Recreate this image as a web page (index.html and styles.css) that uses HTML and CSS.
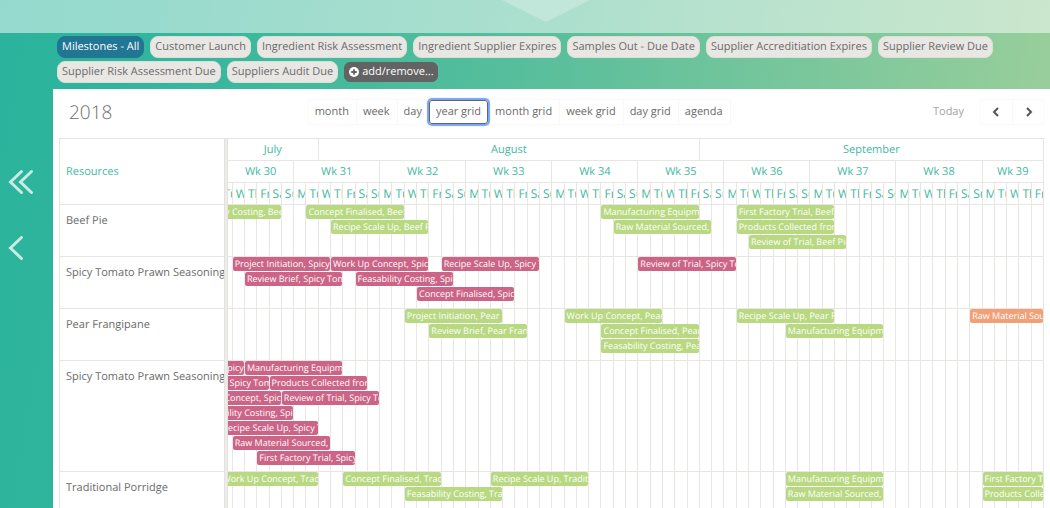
FILE: index.html
```html
<!DOCTYPE html>
<html lang="en">
<head>
<meta charset="utf-8">
<title>Milestones - year grid</title>
<link rel="stylesheet" href="styles.css">
</head>
<body>
<div class="app">
  <header class="banner">
    <svg class="banner-notch" viewBox="0 0 88 22" aria-hidden="true"><path d="M0 0H88L44 22Z"/></svg>
  </header>
  <div class="body">
    <nav class="side" aria-label="History">
      <button class="side-button" type="button" aria-label="Back to start">
        <svg width="26" height="26" viewBox="0 0 26 26"><path d="M13.500 2.500L2.500 13L13.500 23.500M23.500 2.500L12.500 13L23.500 23.500"/></svg>
      </button>
      <button class="side-button" type="button" aria-label="Back">
        <svg width="26" height="26" viewBox="0 0 26 26"><path d="M13.500 2.500L2.500 13L13.500 23.500"/></svg>
      </button>
    </nav>
    <main class="main">
      <div class="filters">
        <button class="pill pill-active" type="button">Milestones - All</button>
        <button class="pill" type="button">Customer Launch</button>
        <button class="pill" type="button">Ingredient Risk Assessment</button>
        <button class="pill" type="button">Ingredient Supplier Expires</button>
        <button class="pill" type="button">Samples Out - Due Date</button>
        <button class="pill" type="button">Supplier Accreditiation Expires</button>
        <button class="pill" type="button">Supplier Review Due</button>
        <button class="pill" type="button">Supplier Risk Assessment Due</button>
        <button class="pill" type="button">Suppliers Audit Due</button>
        <button class="pill pill-add" type="button"><svg width="10" height="10" viewBox="0 0 10 10" aria-hidden="true"><circle cx="5" cy="5" r="5" fill="#fff"/><path d="M5 2.200V7.800M2.200 5H7.800" stroke="#636363" stroke-width="1.800"/></svg>add/remove...</button>
      </div>
      <section class="panel">
        <div class="toolbar">
          <h1 class="title">2018</h1>
          <div class="views">
            <button class="view" type="button">month</button>
            <button class="view" type="button">week</button>
            <button class="view" type="button">day</button>
            <button class="view view-active" type="button">year grid</button>
            <button class="view" type="button">month grid</button>
            <button class="view" type="button">week grid</button>
            <button class="view" type="button">day grid</button>
            <button class="view" type="button">agenda</button>
          </div>
          <div class="paging">
            <button class="today" type="button" disabled>Today</button>
            <div class="arrows">
              <button class="arrow" type="button" aria-label="Previous"><svg width="8" height="10" viewBox="0 0 8 10"><path d="M6 1L2 5L6 9"/></svg></button>
              <button class="arrow" type="button" aria-label="Next"><svg width="8" height="10" viewBox="0 0 8 10"><path d="M2 1L6 5L2 9"/></svg></button>
            </div>
          </div>
        </div>

        <div class="schedule">
          <div class="row row-head">
            <div class="resource resource-head">Resources</div>
            <div class="splitter"></div>
            <div class="lane">
              <div class="scale">
                <div class="period" style="grid-column:1/9">July</div>
                <div class="period" style="grid-column:9/40">August</div>
                <div class="period" style="grid-column:40/68">September</div>
              </div>
              <div class="scale">
                <div class="period" style="grid-column:1/7">Wk 30</div>
                <div class="period" style="grid-column:7/14">Wk 31</div>
                <div class="period" style="grid-column:14/21">Wk 32</div>
                <div class="period" style="grid-column:21/28">Wk 33</div>
                <div class="period" style="grid-column:28/35">Wk 34</div>
                <div class="period" style="grid-column:35/42">Wk 35</div>
                <div class="period" style="grid-column:42/49">Wk 36</div>
                <div class="period" style="grid-column:49/56">Wk 37</div>
                <div class="period" style="grid-column:56/63">Wk 38</div>
                <div class="period" style="grid-column:63/68">Wk 39</div>
              </div>
              <div class="track day-names"></div>
            </div>
          </div>

          <div class="row">
            <div class="resource">Beef Pie</div>
            <div class="splitter"></div>
            <div class="lane">
              <div class="track events">
                <div class="event green" style="grid-area:1/6/auto/span 8">Feasability Costing, Beef Pie</div>
                <div class="event green" style="grid-area:1/16/auto/span 8">Concept Finalised, Beef Pie</div>
                <div class="event green" style="grid-area:2/18/auto/span 8">Recipe Scale Up, Beef Pie</div>
                <div class="event green" style="grid-area:1/40/auto/span 8">Manufacturing Equipment, Beef Pie</div>
                <div class="event green" style="grid-area:2/41/auto/span 8">Raw Material Sourced, Beef Pie</div>
                <div class="event green" style="grid-area:1/51/auto/span 8">First Factory Trial, Beef Pie</div>
                <div class="event green" style="grid-area:2/51/auto/span 8">Products Collected from Trial, Beef Pie</div>
                <div class="event green" style="grid-area:3/52/auto/span 8">Review of Trial, Beef Pie</div>
              </div>
            </div>
          </div>

          <div class="row">
            <div class="resource">Spicy Tomato Prawn Seasoning</div>
            <div class="splitter"></div>
            <div class="lane">
              <div class="track events">
                <div class="event pink" style="grid-area:1/10/auto/span 8">Project Initiation, Spicy Tomato</div>
                <div class="event pink" style="grid-area:2/11/auto/span 8">Review Brief, Spicy Tomato</div>
                <div class="event pink" style="grid-area:1/18/auto/span 8">Work Up Concept, Spicy Tomato</div>
                <div class="event pink" style="grid-area:2/20/auto/span 8">Feasability Costing, Spicy Tomato</div>
                <div class="event pink" style="grid-area:3/25/auto/span 8">Concept Finalised, Spicy Tomato</div>
                <div class="event pink" style="grid-area:1/27/auto/span 8">Recipe Scale Up, Spicy Tomato</div>
                <div class="event pink" style="grid-area:1/43/auto/span 8">Review of Trial, Spicy Tomato</div>
              </div>
            </div>
          </div>

          <div class="row">
            <div class="resource">Pear Frangipane</div>
            <div class="splitter"></div>
            <div class="lane">
              <div class="track events">
                <div class="event green" style="grid-area:1/24/auto/span 8">Project Initiation, Pear Frangipane</div>
                <div class="event green" style="grid-area:2/26/auto/span 8">Review Brief, Pear Frangipane</div>
                <div class="event green" style="grid-area:1/37/auto/span 8">Work Up Concept, Pear Frangipane</div>
                <div class="event green" style="grid-area:2/40/auto/span 8">Concept Finalised, Pear Frangipane</div>
                <div class="event green" style="grid-area:3/40/auto/span 8">Feasability Costing, Pear Frangipane</div>
                <div class="event green" style="grid-area:1/51/auto/span 8">Recipe Scale Up, Pear Frangipane</div>
                <div class="event green" style="grid-area:2/55/auto/span 8">Manufacturing Equipment, Pear</div>
                <div class="event orange" style="grid-area:1/70/auto/76">Raw Material Sourced, Pear</div>
              </div>
            </div>
          </div>

          <div class="row">
            <div class="resource">Spicy Tomato Prawn Seasoning</div>
            <div class="splitter"></div>
            <div class="lane">
              <div class="track events">
                <div class="event pink" style="grid-area:1/3/auto/span 8">Project Initiation, Spicy Tomato</div>
                <div class="event pink" style="grid-area:2/5/auto/span 8">Review Brief, Spicy Tomato</div>
                <div class="event pink" style="grid-area:3/6/auto/span 8">Work Up Concept, Spicy Tomato</div>
                <div class="event pink" style="grid-area:4/7/auto/span 8">Feasability Costing, Spicy Tomato</div>
                <div class="event pink" style="grid-area:5/9/auto/span 8">Recipe Scale Up, Spicy Tomato</div>
                <div class="event pink" style="grid-area:6/10/auto/span 8">Raw Material Sourced, Spicy Tomato</div>
                <div class="event pink" style="grid-area:1/11/auto/span 8">Manufacturing Equipment, Spicy Tomato</div>
                <div class="event pink" style="grid-area:7/12/auto/span 8">First Factory Trial, Spicy Tomato</div>
                <div class="event pink" style="grid-area:2/13/auto/span 8">Products Collected from Trial, Spicy</div>
                <div class="event pink" style="grid-area:3/14/auto/span 8">Review of Trial, Spicy Tomato</div>
              </div>
            </div>
          </div>

          <div class="row row-last">
            <div class="resource">Traditional Porridge</div>
            <div class="splitter"></div>
            <div class="lane">
              <div class="track events">
                <div class="event green" style="grid-area:1/9/auto/span 8">Work Up Concept, Traditional</div>
                <div class="event green" style="grid-area:1/19/auto/span 8">Concept Finalised, Traditional</div>
                <div class="event green" style="grid-area:2/24/auto/span 8">Feasability Costing, Traditional</div>
                <div class="event green" style="grid-area:1/31/auto/span 8">Recipe Scale Up, Traditional</div>
                <div class="event green" style="grid-area:1/55/auto/span 8">Manufacturing Equipment, Traditional</div>
                <div class="event green" style="grid-area:2/55/auto/span 8">Raw Material Sourced, Traditional</div>
                <div class="event green" style="grid-area:1/71/auto/76">First Factory Trial, Traditional</div>
                <div class="event green" style="grid-area:2/71/auto/76">Products Collected from Trial</div>
              </div>
            </div>
          </div>
        </div>
      </section>
    </main>
  </div>
</div>
<script src="script.js"></script>
</body>
</html>
```
FILE: styles.css
```css
* { box-sizing: border-box; }

body {
  margin: 0;
  font-family: "Open Sans", "Noto Sans", sans-serif;
  font-size: 11px;
  line-height: 16px;
  color: #6b6b6b;
  text-rendering: geometricPrecision;
}

button {
  margin: 0;
  padding: 0;
  border: 0;
  background: none;
  font: inherit;
  color: inherit;
  text-rendering: inherit;
  white-space: nowrap;
}

.app {
  display: flex;
  flex-direction: column;
  height: 100vh;
  overflow: hidden;
  background: linear-gradient(100deg, #2bb39d 0%, #30b59d 12%, #5bbf9c 50%, #9ccf9b 96%);
}

.banner {
  display: flex;
  justify-content: center;
  align-items: flex-start;
  flex: none;
  height: 33px;
  padding-left: 42px;
  background: rgba(255, 255, 255, 0.5);
}

.banner-notch {
  width: 88px;
  height: 22px;
  fill: rgba(255, 255, 255, 0.25);
}

.body {
  display: flex;
  flex: 1;
  min-height: 0;
}

.side {
  display: flex;
  flex-direction: column;
  flex: none;
  gap: 40px;
  width: 53px;
  padding: 136px 0 0 8px;
}

.side-button {
  width: 26px;
  height: 26px;
}

.side-button svg {
  display: block;
  fill: none;
  stroke: #c9ebe3;
  stroke-width: 3;
  stroke-linecap: round;
}

.main {
  display: flex;
  flex-direction: column;
  flex: 1;
  min-width: 0;
}

.filters {
  display: flex;
  flex-wrap: wrap;
  gap: 3px 6px;
  padding: 3px 4px 6px;
}

.pill {
  height: 22px;
  padding: 0 4px;
  border: 1px solid #dcdfd8;
  border-radius: 8px;
  background: #e8e7e3;
}

.pill-active {
  border-color: #217693;
  background: #217693;
  color: #fff;
}

.pill-add {
  display: flex;
  align-items: center;
  gap: 3px;
  height: 20px;
  margin-top: 1px;
  padding: 0 3px 0 4px;
  border-color: #636363;
  border-radius: 6px;
  background: #636363;
  color: #fff;
}

.panel {
  display: flex;
  flex-direction: column;
  flex: 1;
  min-height: 0;
  padding: 0 6px;
  background: #fff;
}

.toolbar {
  display: flex;
  justify-content: space-between;
  align-items: center;
  flex: none;
  height: 49px;
  padding: 0 0 4px 10px;
}

.title {
  margin: 0;
  font-size: 19px;
  font-weight: 300;
  line-height: 26px;
}

.views,
.paging,
.arrows {
  display: flex;
}

.views,
.arrows {
  border-radius: 3px;
  box-shadow: 0 0 2px #ececec;
}

.view {
  height: 24px;
  padding: 0 7px;
  box-shadow: 1px 0 0 #f8f8f8;
}

.view-active {
  padding: 0 6px;
  border: 1px solid #666;
  border-radius: 3px;
  box-shadow: 0 0 1px 2px #72a4f3;
  z-index: 1;
}

.paging { gap: 8px; }

.today {
  padding: 0 8px;
  color: #a3a3a3;
}

.arrow {
  display: grid;
  place-items: center;
  width: 32px;
  height: 24px;
}

.arrow + .arrow { border-left: 1px solid #f8f8f8; }

.arrow svg {
  fill: none;
  stroke: #555;
  stroke-width: 2;
}

.schedule {
  display: flex;
  flex-direction: column;
  flex: 1;
  min-height: 0;
  border: 1px solid #e6e4e1;
  border-bottom: 0;
}

.row {
  display: grid;
  grid-template-columns: 164px 4px minmax(0, 1fr);
  flex: none;
  min-height: 52px;
  border-bottom: 1px solid #e8e6e3;
}

.row-head {
  min-height: 66px;
  color: #3fb99f;
}

.row-last {
  flex: 1 0 auto;
  border-bottom: 0;
}

.resource {
  padding: 8px 0 0 6px;
  overflow: hidden;
  white-space: nowrap;
}

.resource-head {
  align-self: center;
  padding-top: 0;
}

.splitter {
  margin-bottom: -1px;
  border: solid #e4e2df;
  border-width: 0 1px;
  background: #eeecea;
}

.lane {
  overflow: hidden;
}

/* The window shows 66.3 days: the last part of a Tuesday, then 66 full days. */
.scale {
  display: grid;
  grid-template-columns: minmax(0, 3fr) repeat(66, minmax(0, 10fr));
}

.period {
  height: 22px;
  border-bottom: 1px solid #e8e6e3;
  line-height: 22px;
  text-align: center;
}

.period + .period { border-left: 1px solid #e8e6e3; }

/* A track holds 75 days from 16 July; the first 8.7 lie left of the window. */
.track {
  display: grid;
  grid-template-columns: repeat(75, minmax(0, 1fr));
  width: calc(100% * 75 / 66.3);
  margin-left: calc(100% * -8.7 / 66.3);
}

.day-name {
  height: 21px;
  padding-left: 3px;
  border-left: 1px solid #e8e6e3;
  font-size: 12px;
  line-height: 21px;
  overflow: hidden;
}

.events {
  grid-template-rows: repeat(7, auto);
  align-content: start;
  height: 100%;
  padding-bottom: 5px;
}

.day-line {
  grid-row: 1 / 8;
  height: 100vh;
  margin-bottom: -100vh;
  border-left: 1px solid #e9e7e4;
}

.event {
  height: 14px;
  margin: 0 0 1px 1px;
  padding-left: 2px;
  border-radius: 2px;
  font-size: 9px;
  line-height: 14px;
  color: #fff;
  white-space: nowrap;
  overflow: hidden;
  z-index: 1;
}

.green { background: #b8d981; }
.pink { background: #cb6486; }
.orange { background: #f1a078; }
```
FILE: script.js
```js
const DAYS = 75;
const NAMES = ["Mo", "Tu", "We", "Th", "Fr", "Sa", "Su"];

const header = document.querySelector(".day-names");
for (let i = 0; i < DAYS; i++) {
  const cell = document.createElement("div");
  cell.className = "day-name";
  cell.textContent = NAMES[i % 7];
  header.append(cell);
}

document.querySelectorAll(".events").forEach((track) => {
  for (let i = DAYS; i > 0; i--) {
    const line = document.createElement("div");
    line.className = "day-line";
    line.style.gridColumn = i;
    track.prepend(line);
  }
});
```
